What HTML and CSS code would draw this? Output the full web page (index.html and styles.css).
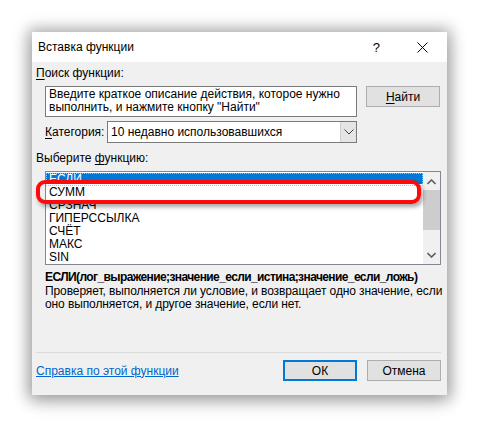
FILE: index.html
```html
<!DOCTYPE html>
<html lang="ru">
<head>
<meta charset="utf-8">
<link rel="stylesheet" href="styles.css">
</head>
<body>
<div class="dialog">
  <div class="titlebar">
    <span class="title">Вставка функции</span>
    <span class="help">?</span>
    <svg class="close" width="11" height="11" viewBox="0 0 11 11"><path d="M0.5 0.5 L10.5 10.5 M10.5 0.5 L0.5 10.5" stroke="#000" stroke-width="1" fill="none"/></svg>
  </div>
  <div class="body">
    <div class="label"><u>П</u>оиск функции:</div>
    <div class="search-row">
      <div class="textbox">Введите краткое описание действия, которое нужно выполнить, и нажмите кнопку "Найти"</div>
      <div class="btn"><u>Н</u>айти</div>
    </div>
    <div class="cat-row">
      <span class="cat-label"><u>К</u>атегория:</span>
      <div class="select">
        <span class="select-text">10 недавно использовавшихся</span>
        <span class="select-btn"><svg width="10" height="6" viewBox="0 0 10 6"><path d="M0.5 0.5 L5 5 L9.5 0.5" stroke="#444" fill="none"/></svg></span>
      </div>
    </div>
    <div class="label label2">Выберите <u>ф</u>ункцию:</div>
    <div class="listbox">
      <div class="items">
        <div class="item sel">ЕСЛИ</div>
        <div class="item">СУММ</div>
        <div class="item">СРЗНАЧ</div>
        <div class="item">ГИПЕРССЫЛКА</div>
        <div class="item">СЧЁТ</div>
        <div class="item">МАКС</div>
        <div class="item">SIN</div>
      </div>
      <div class="scrollbar">
        <svg class="arr" width="9" height="6" viewBox="0 0 9 6"><path d="M0.5 5 L4.5 1 L8.5 5" stroke="#606060" stroke-width="1.6" fill="none"/></svg>
        <div class="track"><div class="thumb"></div></div>
        <svg class="arr" width="9" height="6" viewBox="0 0 9 6"><path d="M0.5 1 L4.5 5 L8.5 1" stroke="#606060" stroke-width="1.6" fill="none"/></svg>
      </div>
      <div class="highlight"></div>
    </div>
    <div class="signature">ЕСЛИ(лог_выражение;значение_если_истина;значение_если_ложь)</div>
    <div class="desc">Проверяет, выполняется ли условие, и возвращает одно значение, если оно выполняется, и другое значение, если нет.</div>
    <div class="sep"></div>
    <div class="footer">
      <a class="link">Справка по этой функции</a>
      <div class="btn ok">ОК</div>
      <div class="btn">Отмена</div>
    </div>
  </div>
</div>
</body>
</html>
```
FILE: styles.css
```css
* { box-sizing: border-box; }
html, body { margin: 0; padding: 0; background: #fff; }
body {
  width: 479px; height: 427px; overflow: hidden;
  font-family: "Liberation Sans", Arial, sans-serif;
  font-size: 12px; color: #000;
  padding: 32px 0 0 32px;
}
u { text-decoration: underline; text-underline-offset: 2px; }
.dialog {
  width: 415px; height: 363px;
  background: #f0f0f0;
  box-shadow: 0 0 14px 4px rgba(0,0,0,0.28), 0 6px 18px rgba(0,0,0,0.2);
  display: flex; flex-direction: column;
}
.titlebar {
  height: 30px; background: #fff;
  display: flex; align-items: center;
  padding-left: 6px;
}
.title { font-size: 12px; flex: 1; }
.help { margin-right: 37px; font-size: 13px; }
.close { margin-right: 19px; }
.body { flex: 1; padding: 3px 6px 0 4px; display: flex; flex-direction: column; }
.label { line-height: 16px; height: 16px; }
.search-row { display: flex; margin: 5px 0 0 9px; gap: 9px; align-items: flex-start; }
.textbox {
  width: 312px; height: 31px; background: #fff;
  border: 1px solid #7a7a7a; padding: 0 3px;
  line-height: 13px; padding-top: 1px;
}
.btn {
  width: 74px; height: 21px; background: #e1e1e1;
  border: 1px solid #adadad;
  display: flex; align-items: center; justify-content: center;
  line-height: 14px;
}
.cat-row { display: flex; align-items: center; margin: 4px 0 0 9px; }
.cat-label { width: 62px; }
.select {
  width: 250px; height: 22px; background: #fff;
  border: 1px solid #7a7a7a;
  display: flex; align-items: stretch;
}
.select-text { flex: 1; padding-left: 3px; line-height: 20px; }
.select-btn {
  width: 16px; background: #e5e5e5; border-left: 1px solid #cfcfcf;
  display: flex; align-items: center; justify-content: center;
}
.label2 { margin-top: 7px; }
.listbox {
  position: relative;
  margin: 5px 0 0 9px;
  width: 396px; height: 94px;
  border: 1px solid #828790; background: #fff;
  display: flex;
}
.items { flex: 1; padding-top: 1px; overflow: hidden; }
.item { height: 13px; line-height: 13px; padding-left: 3px; white-space: nowrap; }
.item.sel {
  color: #fff;
  background: linear-gradient(#0078d7 0 11px, transparent 11px);
  outline: 1px dotted #9cc9f0; outline-offset: -1px;
}
.scrollbar {
  width: 17px; background: #f0f0f0;
  display: flex; flex-direction: column; align-items: center;
}
.arr { margin: 7px 0 4px; flex: none; }
.scrollbar .arr:last-child { margin: 4px 0 6px; }
.track { flex: 1; width: 100%; }
.thumb { width: 100%; height: 40px; background: #cdcdcd; margin-top: 1px; }
.highlight {
  position: absolute; left: -10px; top: 8px;
  width: 385px; height: 24px;
  border: 4px solid #ff0a0a; border-radius: 9px;
  box-shadow: 2px 3px 4px rgba(0,0,0,0.35);
}
.signature { margin: 4px 0 0 9px; font-weight: bold; line-height: 16px; white-space: nowrap; letter-spacing: -0.6px; }
.desc { margin-left: 9px; line-height: 13px; width: 400px; letter-spacing: -0.1px; }
.sep { margin-top: auto; height: 1px; background: #dadada; width: 405px; }
.footer { display: flex; align-items: center; height: 42px; padding-bottom: 7px; gap: 10px; }
.link { color: #0066cc; text-decoration: underline; flex: 1; }
.btn.ok { border: 2px solid #0078d7; }
```
